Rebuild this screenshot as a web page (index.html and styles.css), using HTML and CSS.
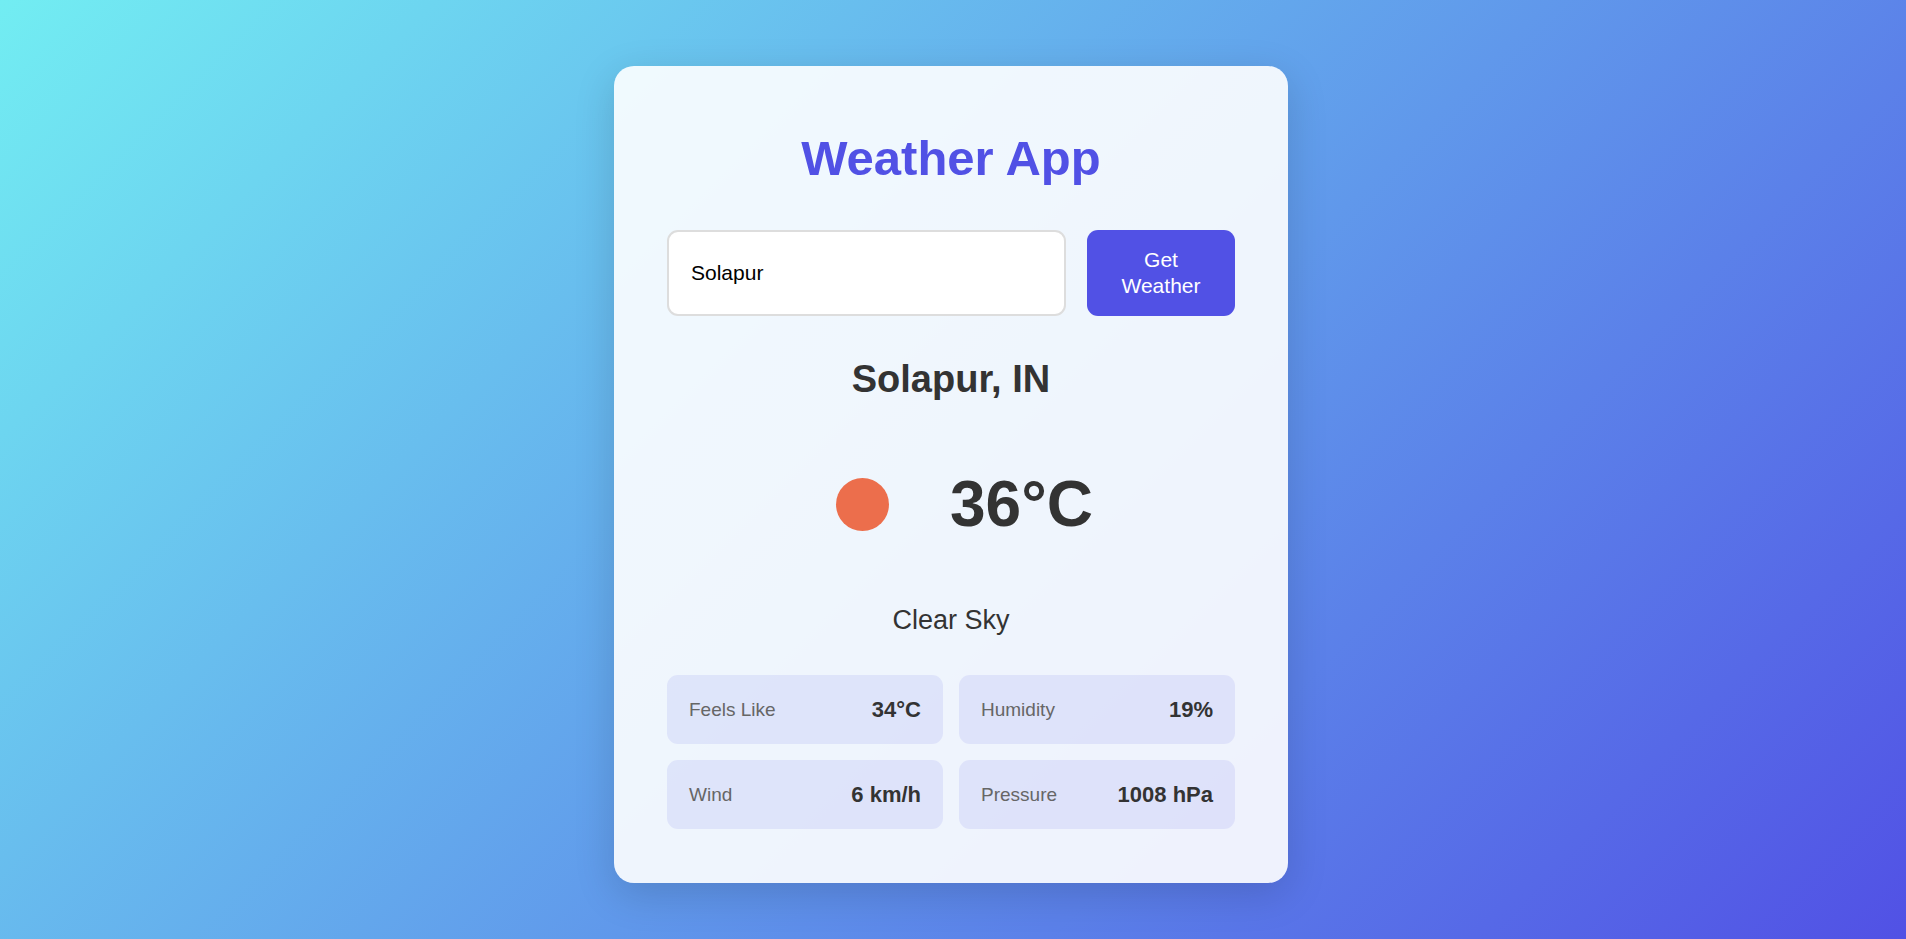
FILE: index.html
```html
<!DOCTYPE html>
<html lang="en">
<head>
<meta charset="utf-8">
<title>Weather App</title>
<link rel="stylesheet" href="styles.css">
</head>
<body>
<main class="card">
  <h1 class="title">Weather App</h1>
  <form class="search">
    <input class="search-input" type="text" value="Solapur" aria-label="City name">
    <button class="search-button" type="button">Get Weather</button>
  </form>
  <h2 class="city">Solapur, IN</h2>
  <div class="current">
    <svg class="icon" viewBox="0 0 80 80" role="img" aria-label="Clear sky"><circle cx="40" cy="40" r="19.8" fill="#ec6e4c"/></svg>
    <span class="temp">36°C</span>
  </div>
  <p class="description">Clear Sky</p>
  <dl class="stats">
    <div class="stat"><dt class="label">Feels Like</dt><dd class="value">34°C</dd></div>
    <div class="stat"><dt class="label">Humidity</dt><dd class="value">19%</dd></div>
    <div class="stat"><dt class="label">Wind</dt><dd class="value">6 km/h</dd></div>
    <div class="stat"><dt class="label">Pressure</dt><dd class="value">1008 hPa</dd></div>
  </dl>
</main>
</body>
</html>
```

FILE: styles.css
```css
* {
  box-sizing: border-box;
  margin: 0;
}

body {
  display: flex;
  justify-content: center;
  align-items: flex-start;
  min-height: 100vh;
  padding: 66px 4px 56px 0;
  font-family: "Liberation Sans", Arial, sans-serif;
  color: #333;
  background: linear-gradient(135deg, #72edf2, #5151e5);
}

.card {
  width: 100%;
  max-width: 674px;
  padding: 53px 53px 54px;
  border-radius: 20px;
  background: rgba(255, 255, 255, 0.9);
  box-shadow: 0 11px 40px rgba(0, 0, 0, 0.15);
  text-align: center;
}

.title {
  margin-bottom: 32px;
  font-size: 49px;
  line-height: 79px;
  color: #5151e5;
}

.search {
  display: flex;
  gap: 21px;
  margin-bottom: 32px;
}

.search-input {
  flex: 1;
  min-width: 0;
  padding: 16px 22px;
  border: 2px solid #ddd;
  border-radius: 11px;
  background: #fff;
  font: 21px "Liberation Sans", Arial, sans-serif;
  color: #000;
}

.search-button {
  width: 148px;
  padding: 17px 24px;
  border: 0;
  border-radius: 11px;
  background: #5151e5;
  font: 21px/26px "Liberation Sans", Arial, sans-serif;
  color: #fff;
}

.city {
  margin-bottom: 40px;
  font-size: 38px;
  line-height: 63px;
}

.current {
  display: flex;
  justify-content: center;
  align-items: center;
  gap: 34px;
  margin-bottom: 40px;
}

.icon {
  width: 107px;
  height: 107px;
}

.temp {
  font-size: 64px;
  font-weight: bold;
  line-height: 107px;
}

.description {
  margin-bottom: 32px;
  font-size: 27px;
  line-height: 45px;
}

.stats {
  display: grid;
  grid-template-columns: 1fr 1fr;
  gap: 16px;
}

.stat {
  display: flex;
  justify-content: space-between;
  align-items: center;
  padding: 16px 22px;
  border-radius: 11px;
  background: rgba(81, 81, 229, 0.1);
  line-height: 37px;
}

.label {
  font-size: 19px;
  color: #666;
}

.value {
  font-size: 22px;
  font-weight: bold;
}
```
